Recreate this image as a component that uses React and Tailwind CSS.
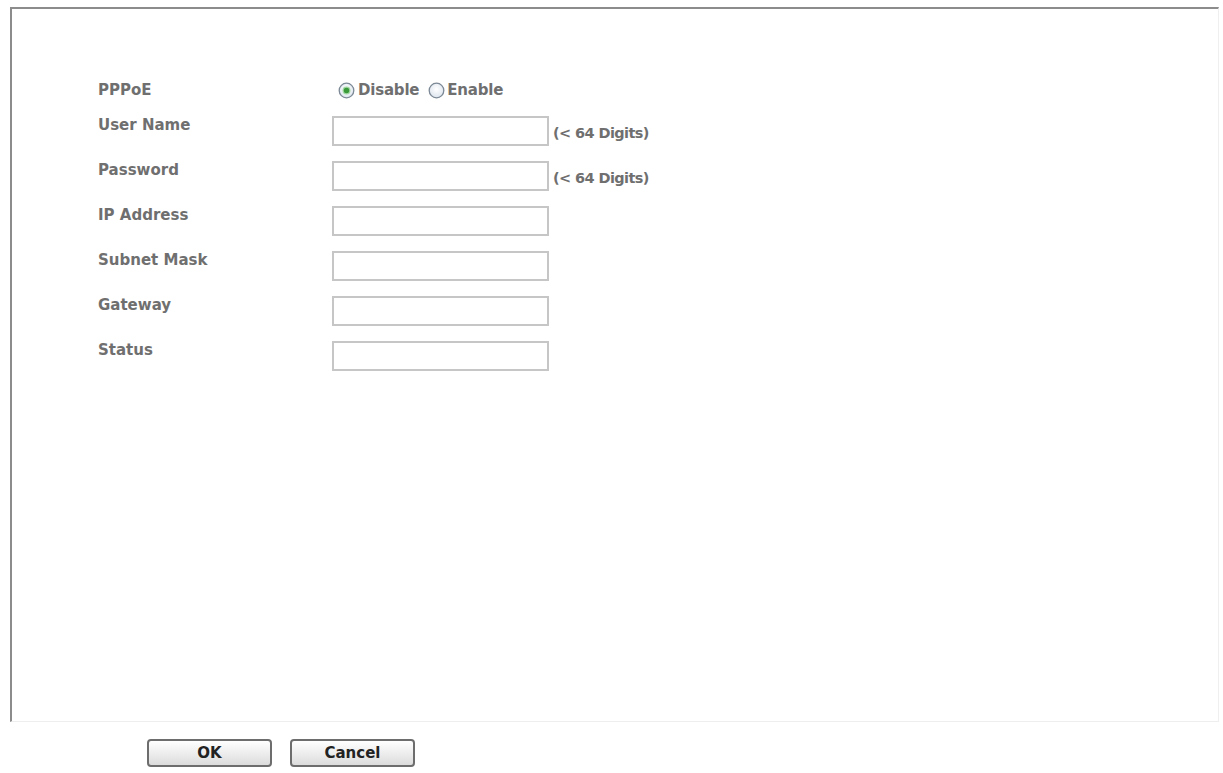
import React from "react";

const font = { fontFamily: '"DejaVu Sans", "Liberation Sans", sans-serif' };

function Radio({ checked }) {
  const id = checked ? "radio-on" : "radio-off";
  return (
    <svg width="17" height="17" viewBox="0 0 17 17" className="shrink-0">
      <defs>
        <radialGradient id={id} cx="50%" cy="40%" r="60%">
          <stop offset="0%" stopColor="#ffffff" />
          <stop offset="100%" stopColor="#dde5ee" />
        </radialGradient>
      </defs>
      <circle cx="8.5" cy="8.5" r="7.3" fill={`url(#${id})`} stroke="#7c8895" strokeWidth="1.3" />
      {checked && <circle cx="8.5" cy="8.5" r="3.4" fill="#3a9a3a" stroke="#a3d9a3" strokeWidth="1.2" />}
    </svg>
  );
}

function Field({ label, note }) {
  return (
    <div className="flex h-[45px] items-start">
      <div className="w-[234px] leading-[20px] text-[15px] font-bold text-[#6f6f6f]">{label}</div>
      <div className="mt-px flex items-center">
        <div className="h-[30px] w-[217px] border-2 border-[#c6c6c6] bg-white" />
        {note && (
          <span className="ml-[4px] mt-[5px] text-[14.5px] font-bold tracking-[-0.6px] text-[#6f6f6f]">{note}</span>
        )}
      </div>
    </div>
  );
}

export default function App() {
  return (
    <div className="h-[773px] w-full overflow-hidden bg-white" style={font}>
      <div className="ml-[10px] mt-[7px] h-[715px] w-[1209px] border-l-2 border-t-2 border-[#8c8c8c] border-r border-b border-r-[#efefef] border-b-[#eeeeee]">
        <div className="pl-[86px] pt-[71px]">
          <div className="flex h-[35px] items-start">
            <div className="w-[234px] leading-[20px] text-[15px] font-bold text-[#6f6f6f]">PPPoE</div>
            <div className="flex items-center text-[15px] font-bold leading-[20px] tracking-[-0.2px] text-[#6f6f6f]">
              <span className="ml-[6px] flex"><Radio checked /></span>
              <span className="ml-[3px]">Disable</span>
              <span className="ml-[9px] flex"><Radio /></span>
              <span className="ml-[2px]">Enable</span>
            </div>
          </div>
          <Field label="User Name" note="(< 64 Digits)" />
          <Field label="Password" note="(< 64 Digits)" />
          <Field label="IP Address" />
          <Field label="Subnet Mask" />
          <Field label="Gateway" />
          <Field label="Status" />
        </div>
      </div>
      <div className="ml-[147px] mt-[17px] flex gap-[18px]">
        <button className="h-[28px] w-[125px] rounded-[4px] border-2 border-[#6d6d6d] bg-gradient-to-b from-[#ffffff] to-[#dcdcdc] text-[15px] font-bold text-[#222]">
          OK
        </button>
        <button className="h-[28px] w-[125px] rounded-[4px] border-2 border-[#6d6d6d] bg-gradient-to-b from-[#ffffff] to-[#dcdcdc] text-[15px] font-bold text-[#222]">
          Cancel
        </button>
      </div>
    </div>
  );
}
